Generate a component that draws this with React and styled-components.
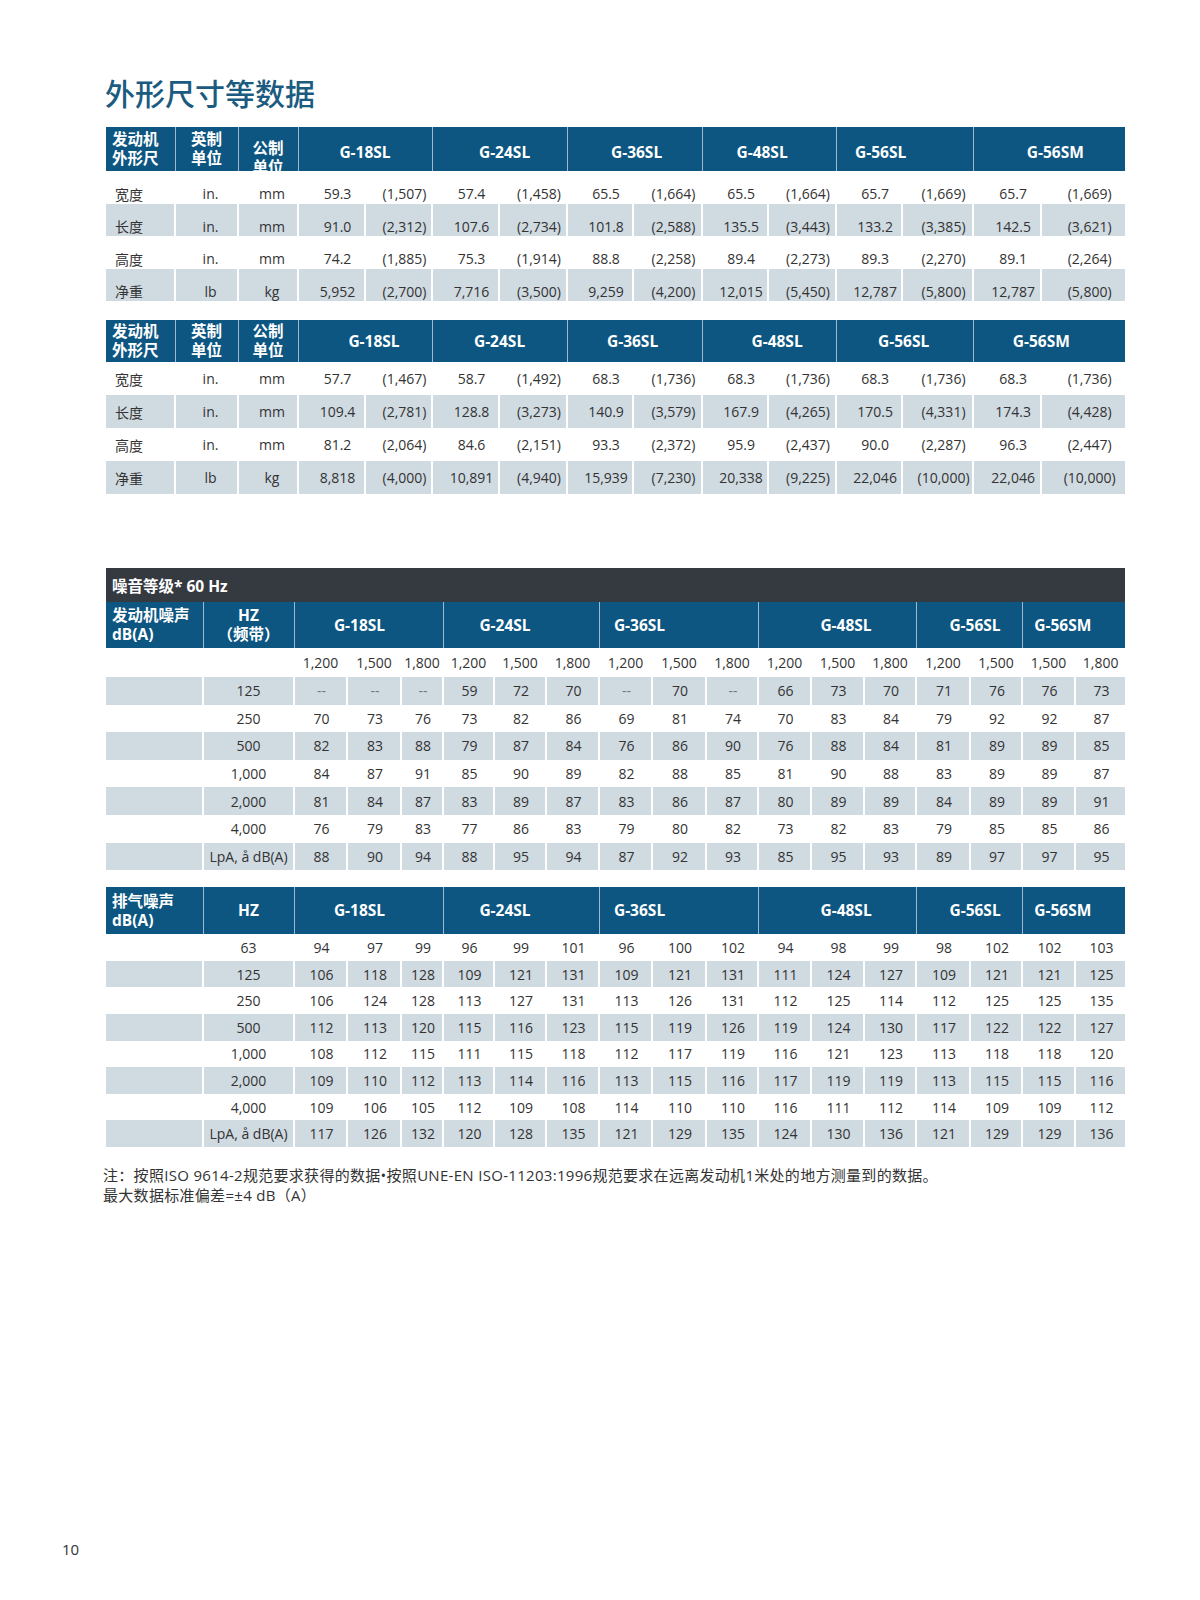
import React from "react";
import styled, { createGlobalStyle } from "styled-components";

const BLUE = "#0c5681";
const GRAY = "#d0dae1";
const DARK = "#353a41";

const dimCols = [69, 63, 60, 67, 67, 67, 68, 66, 69, 66, 68, 66, 71, 68, 84];
const noiseCols = [97, 91, 53, 54, 42, 51, 52, 53, 53, 54, 52, 53, 53, 52, 54, 52, 53, 50];
const models = ["G-18SL", "G-24SL", "G-36SL", "G-48SL", "G-56SL", "G-56SM"];
const noiseSpans = [3, 3, 3, 3, 2, 2];

// the printed headings are not quite centred over their columns
const shiftsA = [0, 5, 2, -7, -24, 6];
const shiftsB = [9, 0, -2, 8, -1, -8];
const shiftsNoise = [-9, -16, -39, 9, 6, -11];

const dimsA = [
  ["宽度", "in.", "mm", "59.3", "(1,507)", "57.4", "(1,458)", "65.5", "(1,664)", "65.5", "(1,664)", "65.7", "(1,669)", "65.7", "(1,669)"],
  ["长度", "in.", "mm", "91.0", "(2,312)", "107.6", "(2,734)", "101.8", "(2,588)", "135.5", "(3,443)", "133.2", "(3,385)", "142.5", "(3,621)"],
  ["高度", "in.", "mm", "74.2", "(1,885)", "75.3", "(1,914)", "88.8", "(2,258)", "89.4", "(2,273)", "89.3", "(2,270)", "89.1", "(2,264)"],
  ["净重", "lb", "kg", "5,952", "(2,700)", "7,716", "(3,500)", "9,259", "(4,200)", "12,015", "(5,450)", "12,787", "(5,800)", "12,787", "(5,800)"],
];

const dimsB = [
  ["宽度", "in.", "mm", "57.7", "(1,467)", "58.7", "(1,492)", "68.3", "(1,736)", "68.3", "(1,736)", "68.3", "(1,736)", "68.3", "(1,736)"],
  ["长度", "in.", "mm", "109.4", "(2,781)", "128.8", "(3,273)", "140.9", "(3,579)", "167.9", "(4,265)", "170.5", "(4,331)", "174.3", "(4,428)"],
  ["高度", "in.", "mm", "81.2", "(2,064)", "84.6", "(2,151)", "93.3", "(2,372)", "95.9", "(2,437)", "90.0", "(2,287)", "96.3", "(2,447)"],
  ["净重", "lb", "kg", "8,818", "(4,000)", "10,891", "(4,940)", "15,939", "(7,230)", "20,338", "(9,225)", "22,046", "(10,000)", "22,046", "(10,000)"],
];

const speeds = ["1,200", "1,500", "1,800", "1,200", "1,500", "1,800", "1,200", "1,500", "1,800", "1,200", "1,500", "1,800", "1,200", "1,500", "1,500", "1,800"];

const engineNoise = [
  ["125", "--", "--", "--", "59", "72", "70", "--", "70", "--", "66", "73", "70", "71", "76", "76", "73"],
  ["250", "70", "73", "76", "73", "82", "86", "69", "81", "74", "70", "83", "84", "79", "92", "92", "87"],
  ["500", "82", "83", "88", "79", "87", "84", "76", "86", "90", "76", "88", "84", "81", "89", "89", "85"],
  ["1,000", "84", "87", "91", "85", "90", "89", "82", "88", "85", "81", "90", "88", "83", "89", "89", "87"],
  ["2,000", "81", "84", "87", "83", "89", "87", "83", "86", "87", "80", "89", "89", "84", "89", "89", "91"],
  ["4,000", "76", "79", "83", "77", "86", "83", "79", "80", "82", "73", "82", "83", "79", "85", "85", "86"],
  ["LpA, å dB(A)", "88", "90", "94", "88", "95", "94", "87", "92", "93", "85", "95", "93", "89", "97", "97", "95"],
];

const exhaustNoise = [
  ["63", "94", "97", "99", "96", "99", "101", "96", "100", "102", "94", "98", "99", "98", "102", "102", "103"],
  ["125", "106", "118", "128", "109", "121", "131", "109", "121", "131", "111", "124", "127", "109", "121", "121", "125"],
  ["250", "106", "124", "128", "113", "127", "131", "113", "126", "131", "112", "125", "114", "112", "125", "125", "135"],
  ["500", "112", "113", "120", "115", "116", "123", "115", "119", "126", "119", "124", "130", "117", "122", "122", "127"],
  ["1,000", "108", "112", "115", "111", "115", "118", "112", "117", "119", "116", "121", "123", "113", "118", "118", "120"],
  ["2,000", "109", "110", "112", "113", "114", "116", "113", "115", "116", "117", "119", "119", "113", "115", "115", "116"],
  ["4,000", "109", "106", "105", "112", "109", "108", "114", "110", "110", "116", "111", "112", "114", "109", "109", "112"],
  ["LpA, å dB(A)", "117", "126", "132", "120", "128", "135", "121", "129", "135", "124", "130", "136", "121", "129", "129", "136"],
];

const GlobalStyle = createGlobalStyle`
  body {
    margin: 0;
    background: #fff;
    font-family: "Open Sans", "Noto Sans CJK SC", sans-serif;
    color: #333;
  }
`;

const Page = styled.div`
  min-height: 1600px;
  box-sizing: border-box;
  display: flex;
  flex-direction: column;
  padding: 74px 0 41px 0;
`;

const Content = styled.div`
  display: flex;
  flex-direction: column;
  align-items: flex-start;
  padding-left: 106px;
`;

const Title = styled.h1`
  margin: 0 0 17px -1px;
  font-family: "Noto Sans CJK SC", sans-serif;
  font-size: 30px;
  line-height: 36px;
  font-weight: 500;
  color: #1b5b7f;
`;

const Grid = styled.table`
  width: 1019px;
  table-layout: fixed;
  border-collapse: collapse;
  border-spacing: 0;
  margin-top: ${p => p.$mt || 0}px;
`;

const Tr = styled.tr`
  height: ${p => p.$h}px;
  background: ${p => (p.$shade ? GRAY : "#fff")};
`;

const Head = styled.th`
  background: ${BLUE};
  color: #fff;
  font-family: "Open Sans", "Noto Sans CJK SC", sans-serif;
  font-weight: 700;
  font-size: 15.5px;
  line-height: 19px;
  text-align: ${p => (p.$left ? "left" : "center")};
  vertical-align: middle;
  padding: ${p => p.$pt || 0}px ${p => (p.$shift < 0 ? -2 * p.$shift : 0)}px 0
    ${p => (p.$left ? 6 : p.$shift > 0 ? 2 * p.$shift : 0)}px;
  border-left: 1px solid #9fb9ca;
  white-space: nowrap;
  &:first-child {
    border-left: none;
  }
`;

const Clip = styled.div`
  height: ${p => p.$h}px;
  overflow: hidden;
  box-sizing: border-box;
  padding-top: ${p => p.$pt}px;
`;

const Bar = styled.td`
  background: ${DARK};
  color: #fff;
  font-weight: 700;
  font-size: 15.5px;
  padding: 0 0 0 6px;
  height: 34px;
  white-space: nowrap;
`;

const Td = styled.td`
  font-size: 14px;
  color: ${p => (p.$dim ? "#777" : "#333")};
  text-align: ${p => (p.$left ? "left" : "center")};
  padding: ${p => p.$pt || 0}px 0 0 ${p => (p.$left ? 9 : p.$pl ?? 6)}px;
  border-left: 2px solid #fff;
  white-space: nowrap;
  font-family: ${p => (p.$cjk ? '"Noto Sans CJK SC", sans-serif' : '"Open Sans", "Noto Sans CJK SC", sans-serif')};
  &:first-child {
    border-left: none;
  }
`;

const Note = styled.p`
  margin: 18px 0 0 -3px;
  font-size: 15px;
  letter-spacing: 0.3px;
  line-height: 20px;
  color: #333;
  white-space: nowrap;
`;

const PageNo = styled.div`
  margin-top: auto;
  padding-left: 62px;
  font-size: 15px;
  line-height: 20px;
  color: #333;
`;

function Cols({ widths }) {
  return (
    <colgroup>
      {widths.map((w, i) => (
        <col key={i} style={{ width: w }} />
      ))}
    </colgroup>
  );
}

function DimTable({ rows, first, shifts, mt }) {
  const pt = first ? 12 : 0;
  return (
    <Grid $mt={mt}>
      <Cols widths={dimCols} />
      <tbody>
        <Tr $h={first ? 44 : 42}>
          <Head $left>发动机<br />外形尺</Head>
          <Head>英制<br />单位</Head>
          <Head>
            {first ? (
              <Clip $h={44} $pt={12}>公制<br />单位</Clip>
            ) : (
              <>公制<br />单位</>
            )}
          </Head>
          {models.map((m, i) => (
            <Head key={m} colSpan={2} $pt={first ? 7 : 0} $shift={shifts[i]}>{m}</Head>
          ))}
        </Tr>
        {rows.map((r, i) => (
          <Tr key={r[0]} $h={first ? (i % 2 ? 32 : 33) : 33} $shade={i % 2 === 1}>
            {r.map((c, j) => (
              <Td key={j} $left={j === 0} $cjk={j === 0} $pt={pt} $pl={j > 2 ? 12 : 8}>{c}</Td>
            ))}
          </Tr>
        ))}
      </tbody>
    </Grid>
  );
}

function NoiseTable({ title, label, hz, rows, withSpeeds, rowH, headH, mt }) {
  return (
    <Grid $mt={mt}>
      <Cols widths={noiseCols} />
      <tbody>
        {title && (
          <tr>
            <Bar colSpan={18}>{title}</Bar>
          </tr>
        )}
        <Tr $h={headH}>
          <Head $left>{label[0]}<br />{label[1]}</Head>
          <Head>{hz}</Head>
          {models.map((m, i) => (
            <Head key={m} colSpan={noiseSpans[i]} $shift={shiftsNoise[i]}>{m}</Head>
          ))}
        </Tr>
        {withSpeeds && (
          <Tr $h={29}>
            <Td />
            <Td />
            {speeds.map((s, i) => (
              <Td key={i} $pl={0}>{s}</Td>
            ))}
          </Tr>
        )}
        {rows.map((r, i) => (
          <Tr key={r[0]} $h={rowH} $shade={withSpeeds ? i % 2 === 0 : i % 2 === 1}>
            <Td />
            {r.map((c, j) => (
              <Td key={j} $pl={j === 0 ? 0 : 2} $dim={c === "--"}>{c}</Td>
            ))}
          </Tr>
        ))}
      </tbody>
    </Grid>
  );
}

export default function App() {
  return (
    <>
      <GlobalStyle />
      <Page>
        <Content>
          <Title>外形尺寸等数据</Title>
          <DimTable rows={dimsA} shifts={shiftsA} first />
          <DimTable rows={dimsB} shifts={shiftsB} mt={19} />
          <NoiseTable
            mt={74}
            title="噪音等级* 60 Hz"
            label={["发动机噪声", "dB(A)"]}
            hz={<>HZ<br />（频带）</>}
            rows={engineNoise}
            withSpeeds
            headH={46}
            rowH={27.6}
          />
          <NoiseTable
            mt={17}
            label={["排气噪声", "dB(A)"]}
            hz="HZ"
            rows={exhaustNoise}
            headH={47}
            rowH={26.6}
          />
          <Note>
            注：按照ISO 9614-2规范要求获得的数据•按照UNE-EN ISO-11203:1996规范要求在远离发动机1米处的地方测量到的数据。
            <br />
            最大数据标准偏差=±4 dB（A）
          </Note>
        </Content>
        <PageNo>10</PageNo>
      </Page>
    </>
  );
}
